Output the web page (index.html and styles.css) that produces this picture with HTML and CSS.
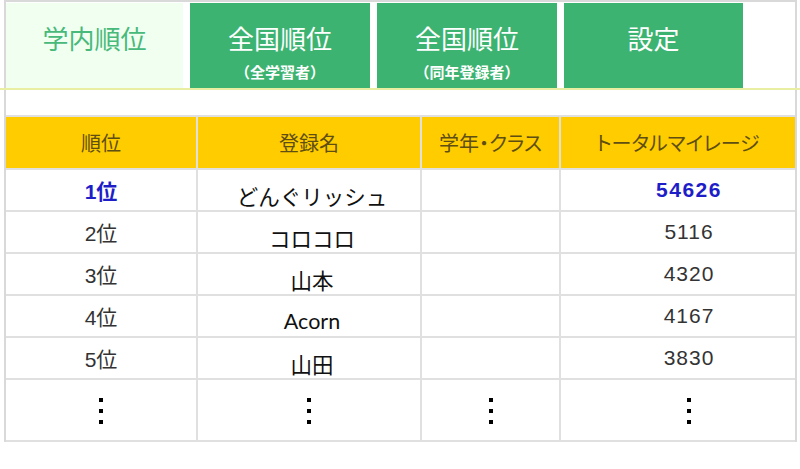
FILE: index.html
```html
<!DOCTYPE html>
<html lang="ja">
<head>
<meta charset="utf-8">
<title>ランキング</title>
<link rel="stylesheet" href="styles.css">
</head>
<body>
<div class="frame">
  <nav class="tabs">
    <a class="tab tab-active"><span class="tab-main">学内順位</span></a>
    <a class="tab"><span class="tab-main">全国順位</span><span class="tab-sub">（全学習者）</span></a>
    <a class="tab"><span class="tab-main">全国順位</span><span class="tab-sub">（同年登録者）</span></a>
    <a class="tab tab-last"><span class="tab-main">設定</span></a>
  </nav>
  <div class="rule"></div>
  <div class="ranking">
    <div class="cell head">順位</div>
    <div class="cell head">登録名</div>
    <div class="cell head">学年・クラス</div>
    <div class="cell head last">トータルマイレージ</div>

    <div class="cell rank top">1位</div>
    <div class="cell name">どんぐリッシュ</div>
    <div class="cell"></div>
    <div class="cell miles top last">54626</div>

    <div class="cell rank">2位</div>
    <div class="cell name">コロコロ</div>
    <div class="cell"></div>
    <div class="cell miles last">5116</div>

    <div class="cell rank">3位</div>
    <div class="cell name">山本</div>
    <div class="cell"></div>
    <div class="cell miles last">4320</div>

    <div class="cell rank">4位</div>
    <div class="cell name">Acorn</div>
    <div class="cell"></div>
    <div class="cell miles last">4167</div>

    <div class="cell rank">5位</div>
    <div class="cell name">山田</div>
    <div class="cell"></div>
    <div class="cell miles last">3830</div>

    <div class="cell more"><span class="vdots"></span></div>
    <div class="cell more"><span class="vdots"></span></div>
    <div class="cell more"><span class="vdots"></span></div>
    <div class="cell more miles last"><span class="vdots"></span></div>
  </div>
</div>
</body>
</html>
```

FILE: styles.css
```css
* { box-sizing: border-box; }
html, body { margin: 0; padding: 0; background: #fff; }
body {
  width: 800px;
  height: 469px;
  overflow: hidden;
  font-family: "Noto Sans CJK JP", sans-serif;
}
.frame {
  margin-left: 4px;
  width: 793px;
  border: 2px solid #d9d9d9;
  border-bottom: 0;
}
.tabs {
  display: flex;
  gap: 7px;
  padding-top: 1px;
  height: 86px;
}
.tab {
  width: 180px;
  height: 85px;
  background: #3cb371;
  color: #fff;
  display: flex;
  flex-direction: column;
  align-items: center;
  padding-top: 20px;
  text-decoration: none;
}
.tab-active {
  width: 177px;
  background: #f0fff0;
  color: #47b97a;
}
.tab-last { width: 179px; }
.tab-main {
  font-size: 26px;
  line-height: 30px;
}
.tab-sub {
  margin-top: 10px;
  font-size: 15px;
  line-height: 17px;
  font-weight: bold;
}
.rule {
  margin: 0 -6px 25px;
  height: 2px;
  background: #e8efa2;
}
.ranking {
  display: grid;
  grid-template-columns: 192px 224px 139px 1fr;
  grid-template-rows: 53px repeat(5, 42px) 62px;
  border-top: 2px solid #e0e0e0;
}
.cell {
  border-right: 2px solid #e0e0e0;
  border-bottom: 2px solid #e0e0e0;
  display: flex;
  align-items: center;
  justify-content: center;
  font-size: 20px;
  color: #333;
}
.cell.last { border-right: 0; }
.head {
  background: #ffcc00;
  color: #5e4e12;
  font-size: 20px;
  font-feature-settings: "palt";
}
.rank {
  font-family: "Liberation Sans", "Noto Sans CJK JP", sans-serif;
  font-size: 21px;
}
.rank.top, .miles.top {
  color: #1e1ec8;
  font-weight: bold;
}
.name {
  font-family: "Lato", "Noto Sans CJK JP", sans-serif;
  font-size: 21.5px;
  color: #111;
  padding-top: 10px;
  padding-left: 6px;
}
.miles {
  font-family: "Liberation Sans", sans-serif;
  font-size: 21px;
  letter-spacing: 1px;
  padding-left: 22px;
}
.miles.top { letter-spacing: 1.5px; }
.more { padding-bottom: 20px; }
.vdots {
  display: block;
  width: 4px;
  height: 4px;
  background: #000;
  box-shadow: 0 11px 0 #000, 0 22px 0 #000;
}
```
